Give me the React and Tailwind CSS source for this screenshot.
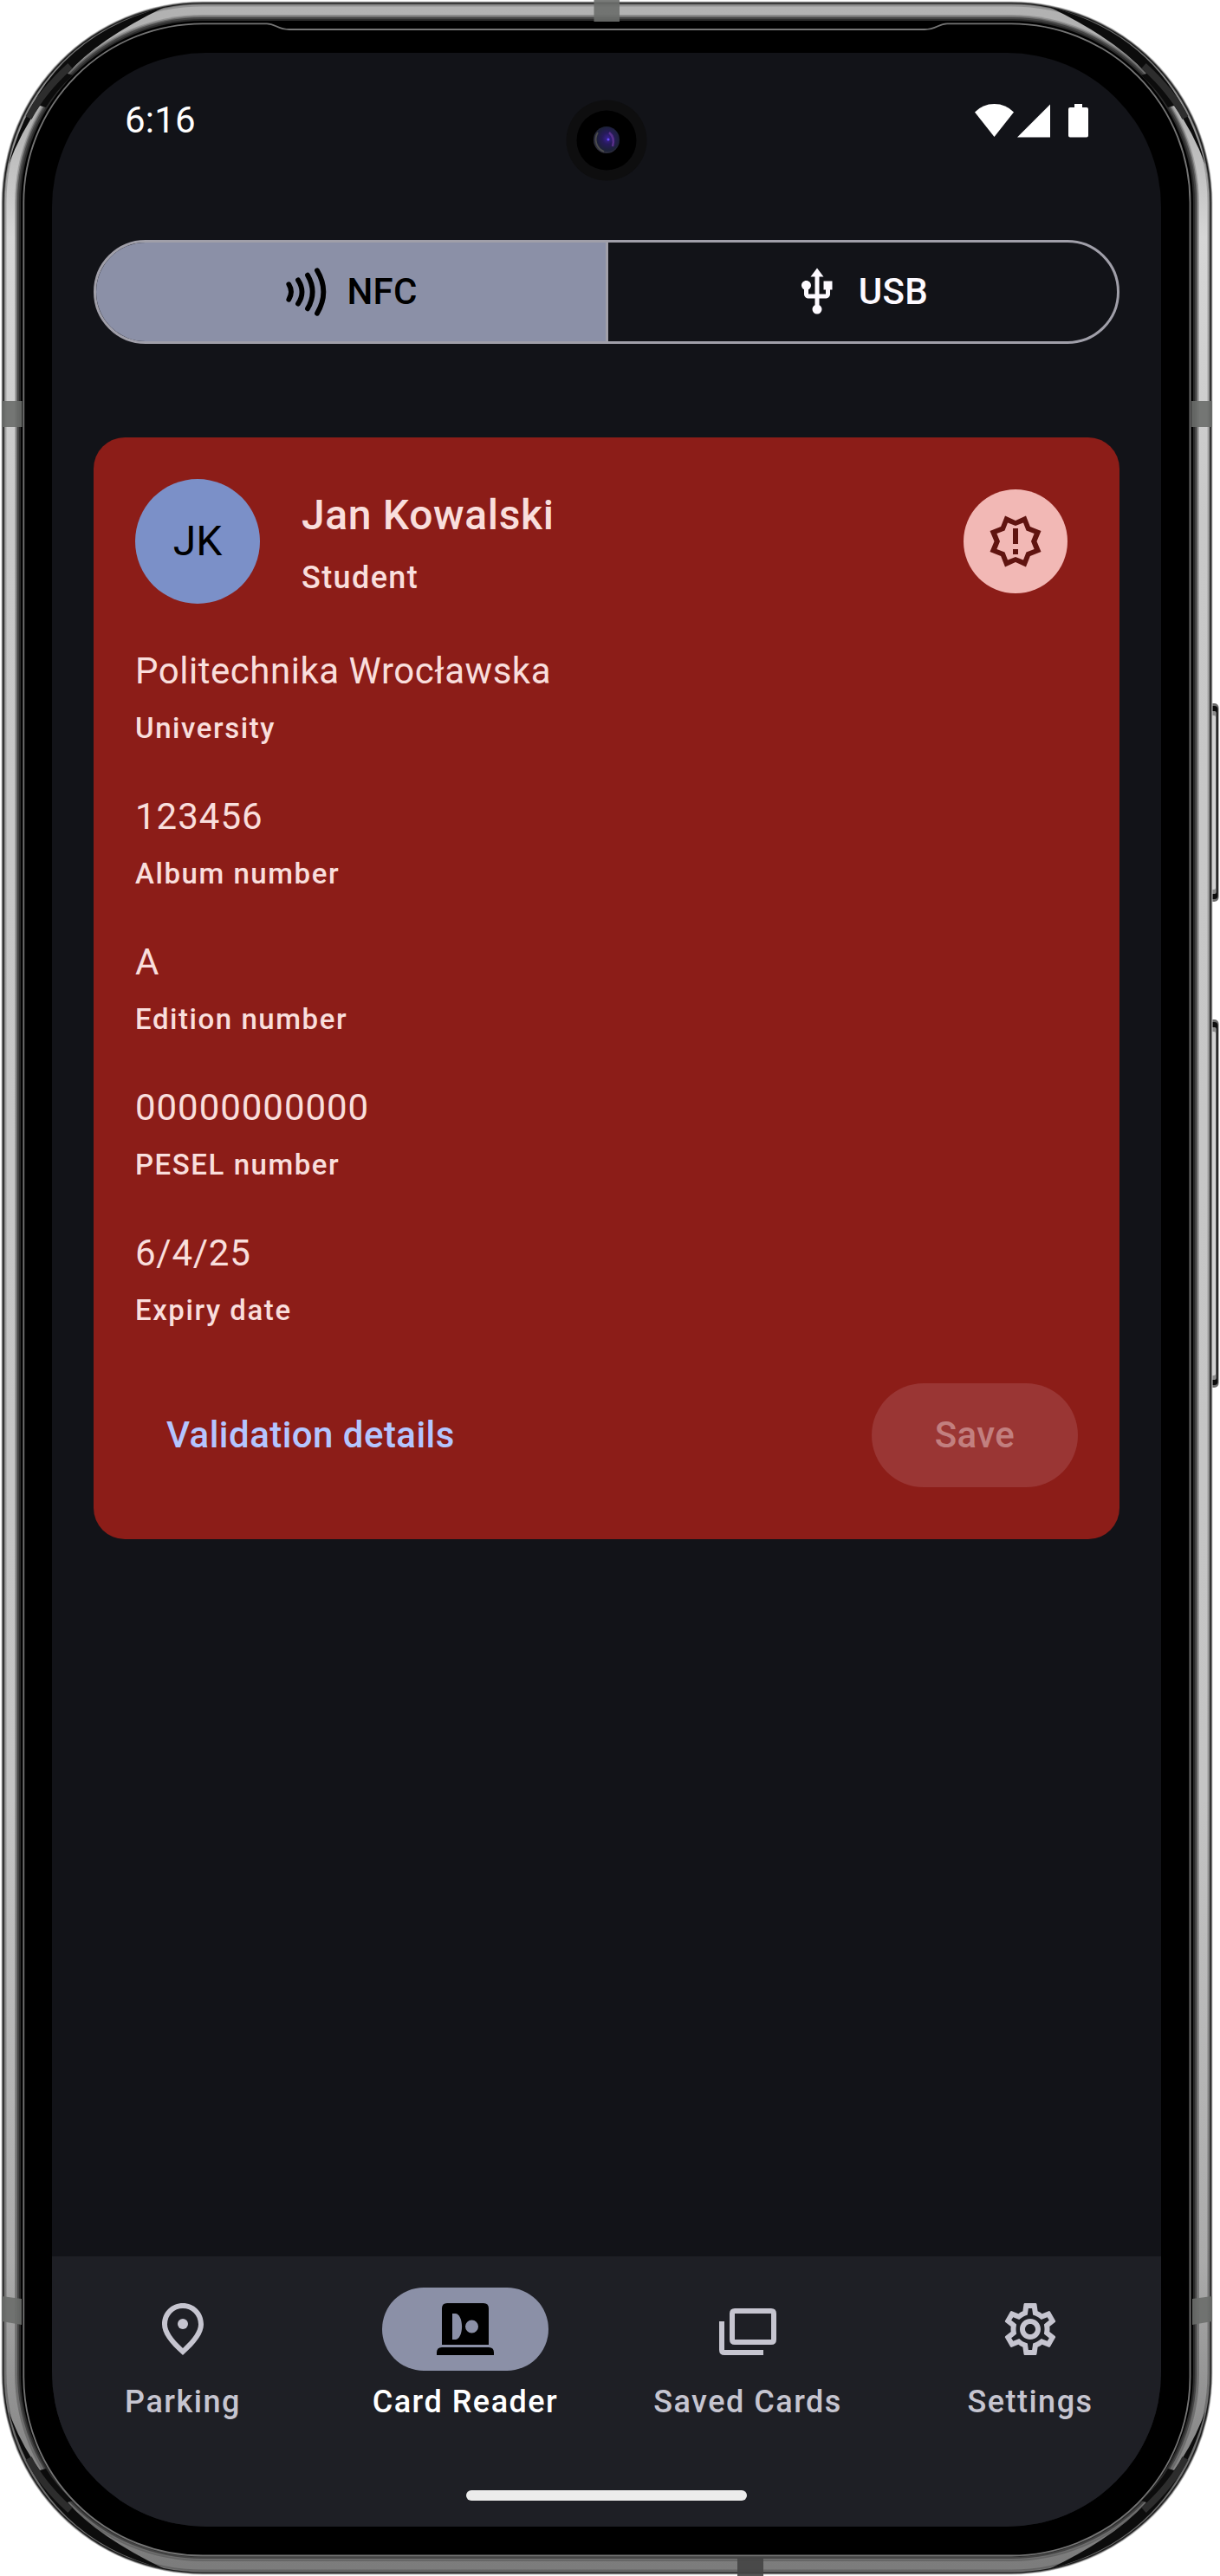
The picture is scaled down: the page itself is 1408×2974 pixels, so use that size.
import React from "react";
import { MdOutlineSettings, MdUsb } from "react-icons/md";

const LAYERS = [
  [1.5, "#c9c9c9"],
  [2.3, "#6a6a6a"],
  [3.2, "#1c1c1c"],
  [4.6, "#707070"],
  [5.6, "url(#metalEdge)"],
  [7.5, "url(#metal)"],
  [17, "url(#metalEdge)"],
  [18.5, "#6e6e6e"],
  [20, "#454545"],
  [22, "#2b2b2b"],
  [24, "#000"],
];

const CORNER = "M10 190Q24 152 46 122L53 124Q65 104 84 87L78 85Q112 46 190 8Q48 44 10 190Z";

function Corner({ transform }) {
  return (
    <g transform={transform}>
      <path d={CORNER} fill="#0c0c0c" />
      <path d="M33 136Q48 106 81 76" fill="none" stroke="#2d2d2d" strokeWidth="8" />
    </g>
  );
}

function SideButton({ y, h }) {
  return (
    <g>
      <rect x="1392" y={y} width="14.5" height={h} rx="5" fill="#6b6b6b" />
      <rect x="1392" y={y + 3} width="13.5" height={h - 6} rx="4" fill="#0d0d0d" />
      <rect x="1392" y={y + 9} width="11.8" height={h - 18} rx="2" fill="#8c8c8c" />
      <rect x="1392" y={y + 14} width="11" height={h - 28} rx="2" fill="#d2d2d2" />
    </g>
  );
}

function PhoneFrame() {
  return (
    <svg className="absolute inset-0" width="1408" height="2974" viewBox="0 0 1408 2974" aria-hidden="true">
      <defs>
        <linearGradient id="metal" x1="0" y1="0" x2="0" y2="1">
          <stop offset="0" stopColor="#b2b2b2" />
          <stop offset="0.04" stopColor="#b0b0b0" />
          <stop offset="0.09" stopColor="#d6d6d6" />
          <stop offset="0.2" stopColor="#c8c8c8" />
          <stop offset="0.7" stopColor="#c4c4c4" />
          <stop offset="0.88" stopColor="#ababab" />
          <stop offset="0.97" stopColor="#808080" />
          <stop offset="1" stopColor="#7c7c7c" />
        </linearGradient>
        <linearGradient id="metalEdge" x1="0" y1="0" x2="0" y2="1">
          <stop offset="0" stopColor="#929292" />
          <stop offset="0.1" stopColor="#a8a8a8" />
          <stop offset="0.7" stopColor="#9c9c9c" />
          <stop offset="1" stopColor="#646464" />
        </linearGradient>
        <radialGradient id="lens" cx="0.55" cy="0.45" r="0.6">
          <stop offset="0" stopColor="#3a2494" />
          <stop offset="0.35" stopColor="#271a5c" />
          <stop offset="0.75" stopColor="#1c2138" />
          <stop offset="1" stopColor="#3a3740" />
        </radialGradient>
      </defs>
      <SideButton y={812} h={229} />
      <SideButton y={1177} h={425} />
      {LAYERS.map(([i, fill]) => (
        <rect key={i} x={i} y={i} width={1401 - 2 * i} height={2974 - 2 * i} rx={234 - i} fill={fill} />
      ))}
      <Corner />
      <Corner transform="translate(1401 0) scale(-1 1)" />
      <Corner transform="translate(0 2974) scale(1 -1)" />
      <Corner transform="translate(1401 2974) scale(-1 -1)" />
      <path
        d="M234 27.3H308C318 27.3 320 34 334 34H1067C1081 34 1083 27.3 1093 27.3H1167A206.5 206.5 0 0 1 1373.5 234V2744A206.5 206.5 0 0 1 1167 2950.5H234A206.5 206.5 0 0 1 27.3 2744V234A206.5 206.5 0 0 1 234 27.3Z"
        fill="#000"
        stroke="#757575"
        strokeWidth="1.8"
      />
      <g fill="#6a6d6a" fillOpacity="0.9">
        <rect x="685.5" y="0" width="29.5" height="25" />
        <rect x="2" y="463" width="23.500" height="30" />
        <rect x="1375" y="463" width="24" height="30" />
        <path d="M2 2651L25 2654V2684L2 2680ZM1399 2651L1376 2654V2684L1399 2680Z" />
        <rect x="851" y="2953" width="30" height="21" fill="#444" />
      </g>
    </svg>
  );
}

function Camera() {
  return (
    <svg className="absolute left-[593px] top-[54px]" width="94" height="94" viewBox="0 0 94 94" aria-hidden="true">
      <circle cx="47" cy="47" r="46.5" fill="#0e0e0f" />
      <circle cx="47" cy="47" r="34.5" fill="#000" />
      <ellipse cx="47" cy="46.5" rx="15" ry="15.5" fill="url(#lens)" />
      <path d="M37 38A15 15 0 0 0 44 60" fill="none" stroke="#4c4c4c" strokeWidth="1.8" />
      <path d="M50 38Q57 44 54 54" fill="none" stroke="#59308a" strokeWidth="2.5" />
      <circle cx="49" cy="46" r="1.5" fill="#6a4cff" />
    </svg>
  );
}

function StatusBar() {
  return (
    <div className="flex h-[156px] items-center justify-between pl-[84px] pr-[84px]">
      <span className="text-[42px] leading-[60px] tracking-[0.2px] text-white">6:16</span>
      <svg width="131" height="40" viewBox="0 0 131 40" fill="#fff" aria-hidden="true">
        <path d="M0 10.5Q9 1 22.5 1T45 10.5L22.5 39Z" />
        <path d="M87 1.500V39.500H49Z" />
        <path d="M115 1h9v4h5q2 0 2 2v30.500q0 2-2 2h-19q-2 0-2-2V7q0-2 2-2h5z" />
      </svg>
    </div>
  );
}

function NfcIcon() {
  return (
    <svg width="60" height="60" viewBox="0 0 180 180" fill="none" stroke="currentColor" strokeWidth="17.500" strokeLinecap="round" aria-hidden="true">
      <path d="M31 64Q47 90 31 116" />
      <path d="M63 49Q90 90 63 131" />
      <path d="M96 32Q130 90 96 148" />
      <path d="M129 16Q173 90 129 164" />
    </svg>
  );
}

function ModeSwitch() {
  return (
    <div className="flex h-[120px] overflow-hidden rounded-full border-[3px] border-[#a09fa9] text-[42px] font-medium tracking-[0.3px]">
      <div className="flex w-[591px] items-center justify-center gap-[17px] border-r-[3px] border-[#a09fa9] bg-[#8b90a7] pr-[5px] text-black">
        <NfcIcon />
        <span className="pb-[2px]">NFC</span>
      </div>
      <div className="flex flex-1 items-center justify-center gap-[18px] pr-[7px] text-[#fdfaff]">
        <MdUsb size={60} />
        <span className="pb-[2px]">USB</span>
      </div>
    </div>
  );
}

function AlertBadge() {
  return (
    <div className="mr-3 flex size-[120px] items-center justify-center rounded-full bg-[#f2b8b5]">
      <svg width="72" height="72" viewBox="-36 -36 72 72" fill="#601410" aria-hidden="true">
        <path
          fillRule="evenodd"
          d="M-12-29.500L0-24L12-29.500L16.900-16.900L29.500-12L24.500 0L29.500 12L16.900 16.900L12 29.500L0 24L-12 29.500L-16.900 16.900L-29.500 12L-24.500 0L-29.500-12L-16.900-16.900ZM-9-21.600L-12.500-12.500L-21.600-9L-18 0L-21.600 9L-12.500 12.500L-9 21.600L0 18L9 21.600L12.500 12.500L21.600 9L18 0L21.600-9L12.500-12.500L9-21.600L0-18Z"
        />
        <path d="M-3-15H3V3H-3ZM-3 9H3V15H-3Z" />
      </svg>
    </div>
  );
}

const FIELDS = [
  ["Politechnika Wrocławska", "University", "tracking-[0.53px]"],
  ["123456", "Album number", "tracking-[1px]"],
  ["A", "Edition number", "tracking-[1px]"],
  ["00000000000", "PESEL number", "tracking-[0.95px]"],
  ["6/4/25", "Expiry date", "tracking-[0.75px]"],
];

function StudentCard() {
  return (
    <section className="mt-[108px] h-[1272px] rounded-[36px] bg-[#8c1d18] p-12 text-[#f9dedc]">
      <header className="flex h-36 items-center">
        <div className="flex size-36 items-center justify-center rounded-full bg-[#7b90c8] text-[48px] text-black">JK</div>
        <div className="ml-12 flex flex-1 flex-col gap-3">
          <h1 className="text-[48px] font-medium leading-[72px] tracking-[0.65px]">Jan Kowalski</h1>
          <p className="text-[36px] font-medium leading-[48px] tracking-[1.400px]">Student</p>
        </div>
        <AlertBadge />
      </header>
      <dl className="mt-12 flex flex-col gap-12">
        {FIELDS.map(([value, label, tracking]) => (
          <div key={label} className="flex flex-col gap-3">
            <dd className={`text-[42px] leading-[60px] ${tracking}`}>{value}</dd>
            <dt className="text-[33px] font-medium leading-[48px] tracking-[1.550px]">{label}</dt>
          </div>
        ))}
      </dl>
      <footer className="mt-[60px] flex h-[120px] items-center justify-between text-[42px] font-medium tracking-[0.45px]">
        <button className="px-9 pb-[2px] text-[#b4c5ff]">Validation details</button>
        <button className="h-[120px] w-[238px] rounded-full bg-[#9a3634] pb-[2px] text-[#c27f7f]">Save</button>
      </footer>
    </section>
  );
}

function PinIcon() {
  return (
    <svg width="72" height="72" viewBox="0 0 24 24" fill="currentColor" aria-hidden="true">
      <path
        fillRule="evenodd"
        d="M12 2C7.800 2 4 5.220 4 10.200c0 3.320 2.670 7.250 8 11.800 5.330-4.550 8-8.480 8-11.800C20 5.220 16.200 2 12 2Zm0 2c3.350 0 6 2.570 6 6.200 0 2.340-1.950 5.440-6 9.140-4.050-3.700-6-6.790-6-9.140C6 6.570 8.650 4 12 4Z"
      />
      <circle cx="12" cy="10" r="2" />
    </svg>
  );
}

function ReaderIcon() {
  return (
    <svg width="72" height="72" viewBox="0 0 24 24" fill="currentColor" aria-hidden="true">
      <path d="M1 22v-1q0-2 2-2h18q2 0 2 2v1Z" />
      <path
        fillRule="evenodd"
        d="M3 18V4q0-2 2-2h14q2 0 2 2v14ZM7 6v10h1.200C9.600 16 10.700 13.760 10.700 11S9.600 6 8.200 6ZM14.500 8.500a2.500 2.500 0 1 0 0 5a2.500 2.500 0 1 0 0-5Z"
      />
    </svg>
  );
}

function CardsIcon() {
  return (
    <svg width="72" height="72" viewBox="0 0 24 24" fill="currentColor" aria-hidden="true">
      <path d="M3 22q-2 0-2-2V9h2v11h15v2Z" />
      <path fillRule="evenodd" d="M7 4h14q2 0 2 2v10q0 2-2 2H7q-2 0-2-2V6q0-2 2-2Zm0 2v10h14V6Z" />
    </svg>
  );
}

const TABS = [
  ["Parking", <PinIcon />],
  ["Card Reader", <ReaderIcon />, true],
  ["Saved Cards", <CardsIcon />],
  ["Settings", <MdOutlineSettings size={72} />],
];

function NavBar() {
  return (
    <nav className="flex h-[312px] flex-col justify-between bg-[#1e1f25] pb-[30px] pt-9">
      <div className="flex gap-6">
        {TABS.map(([label, icon, active]) => (
          <div key={label} className={active ? "flex flex-1 flex-col items-center gap-3 text-white" : "flex flex-1 flex-col items-center gap-3 text-[#c6c5d0]"}>
            <div className={active ? "flex h-24 w-48 items-center justify-center rounded-full bg-[#8b90a7] text-black" : "flex h-24 w-48 items-center justify-center"}>
              {icon}
            </div>
            <span className="whitespace-nowrap text-[36px] font-medium leading-[48px] tracking-[1.500px]">{label}</span>
          </div>
        ))}
      </div>
      <div className="h-3 w-[324px] self-center rounded-full bg-[#ececec]" />
    </nav>
  );
}

export default function App() {
  return (
    <div className="relative h-[2974px] w-[1408px] overflow-hidden bg-white pl-[60px] pt-[61px] font-['Roboto',sans-serif]">
      <PhoneFrame />
      <div className="relative flex h-[2856px] w-[1280px] flex-col overflow-hidden rounded-[178px] bg-[#121318]">
        <StatusBar />
        <main className="flex-1 px-12 pt-[60px]">
          <ModeSwitch />
          <StudentCard />
        </main>
        <NavBar />
        <Camera />
      </div>
    </div>
  );
}
